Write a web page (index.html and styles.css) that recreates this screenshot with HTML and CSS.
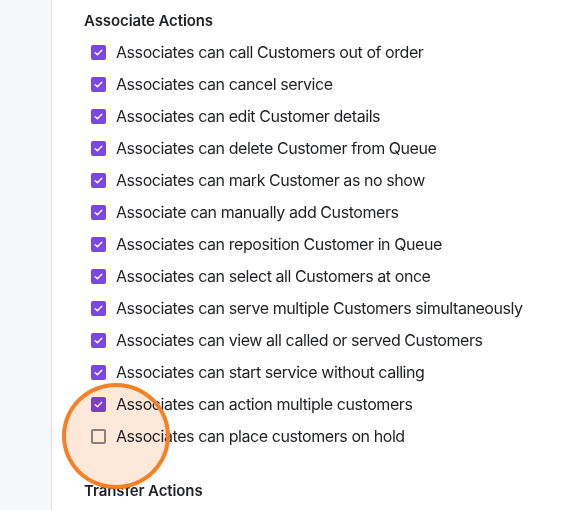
FILE: index.html
```html
<!DOCTYPE html>
<html>
<head>
<meta charset="utf-8">
<link rel="stylesheet" href="styles.css">
</head>
<body>
<div class="layout">
  <aside class="sidebar"></aside>
  <main class="content">
    <h2 class="section-title">Associate Actions</h2>
    <ul class="options">
      <li class="option"><span class="box checked"><svg viewBox="0 0 16 16"><path d="M4.5 8.2l2.3 2.2 4.7-4.7"/></svg></span>Associates can call Customers out of order</li>
      <li class="option"><span class="box checked"><svg viewBox="0 0 16 16"><path d="M4.5 8.2l2.3 2.2 4.7-4.7"/></svg></span>Associates can cancel service</li>
      <li class="option"><span class="box checked"><svg viewBox="0 0 16 16"><path d="M4.5 8.2l2.3 2.2 4.7-4.7"/></svg></span>Associates can edit Customer details</li>
      <li class="option"><span class="box checked"><svg viewBox="0 0 16 16"><path d="M4.5 8.2l2.3 2.2 4.7-4.7"/></svg></span>Associates can delete Customer from Queue</li>
      <li class="option"><span class="box checked"><svg viewBox="0 0 16 16"><path d="M4.5 8.2l2.3 2.2 4.7-4.7"/></svg></span>Associates can mark Customer as no show</li>
      <li class="option"><span class="box checked"><svg viewBox="0 0 16 16"><path d="M4.5 8.2l2.3 2.2 4.7-4.7"/></svg></span>Associate can manually add Customers</li>
      <li class="option"><span class="box checked"><svg viewBox="0 0 16 16"><path d="M4.5 8.2l2.3 2.2 4.7-4.7"/></svg></span>Associates can reposition Customer in Queue</li>
      <li class="option"><span class="box checked"><svg viewBox="0 0 16 16"><path d="M4.5 8.2l2.3 2.2 4.7-4.7"/></svg></span>Associates can select all Customers at once</li>
      <li class="option"><span class="box checked"><svg viewBox="0 0 16 16"><path d="M4.5 8.2l2.3 2.2 4.7-4.7"/></svg></span>Associates can serve multiple Customers simultaneously</li>
      <li class="option"><span class="box checked"><svg viewBox="0 0 16 16"><path d="M4.5 8.2l2.3 2.2 4.7-4.7"/></svg></span>Associates can view all called or served Customers</li>
      <li class="option"><span class="box checked"><svg viewBox="0 0 16 16"><path d="M4.5 8.2l2.3 2.2 4.7-4.7"/></svg></span>Associates can start service without calling</li>
      <li class="option"><span class="box checked"><svg viewBox="0 0 16 16"><path d="M4.5 8.2l2.3 2.2 4.7-4.7"/></svg></span>Associates can action multiple customers</li>
      <li class="option"><span class="box"></span>Associates can place customers on hold</li>
    </ul>
    <h2 class="section-title next">Transfer Actions</h2>
    <div class="highlight"></div>
  </main>
</div>
</body>
</html>
```
FILE: styles.css
```css
* { box-sizing: border-box; }
html, body { margin: 0; padding: 0; background: #fff; }
body {
  font-family: Inter, "Liberation Sans", sans-serif;
  color: #1f2024;
  width: 578px;
  height: 510px;
  overflow: hidden;
}
.layout { display: flex; height: 510px; }
.sidebar {
  width: 52px;
  flex: none;
  background: #f5f6f8;
  border-right: 1px solid #e1e2e6;
}
.content {
  position: relative;
  flex: 1;
  padding: 11px 0 0 32px;
}
.section-title {
  margin: 0;
  font-size: 15px;
  font-weight: 600;
  line-height: 20px;
  letter-spacing: -0.1px;
}
.section-title.next { margin-top: 29px; }
.options {
  list-style: none;
  margin: 5px 0 0;
  padding: 0 0 0 7px;
}
.option {
  display: flex;
  align-items: center;
  height: 32px;
  font-size: 16px;
  gap: 10px;
  letter-spacing: -0.43px;
}
.box {
  width: 15px;
  height: 15px;
  flex: none;
  border: 2px solid #8c8a92;
  border-radius: 2px;
  display: flex;
}
.box.checked {
  background: #7c45e6;
  border: none;
}
.box svg { width: 15px; height: 15px; }
.box path {
  fill: none;
  stroke: #fff;
  stroke-width: 1.6;
  stroke-linecap: round;
  stroke-linejoin: round;
}
.highlight {
  position: absolute;
  left: 10px;
  top: 383px;
  width: 108px;
  height: 106px;
}
.highlight::before,
.highlight::after {
  content: "";
  position: absolute;
  inset: 0;
  border-radius: 50%;
}
.highlight::before {
  background: #fee8da;
  mix-blend-mode: multiply;
}
.highlight::after {
  border: 4px solid #f77f24;
}
```
